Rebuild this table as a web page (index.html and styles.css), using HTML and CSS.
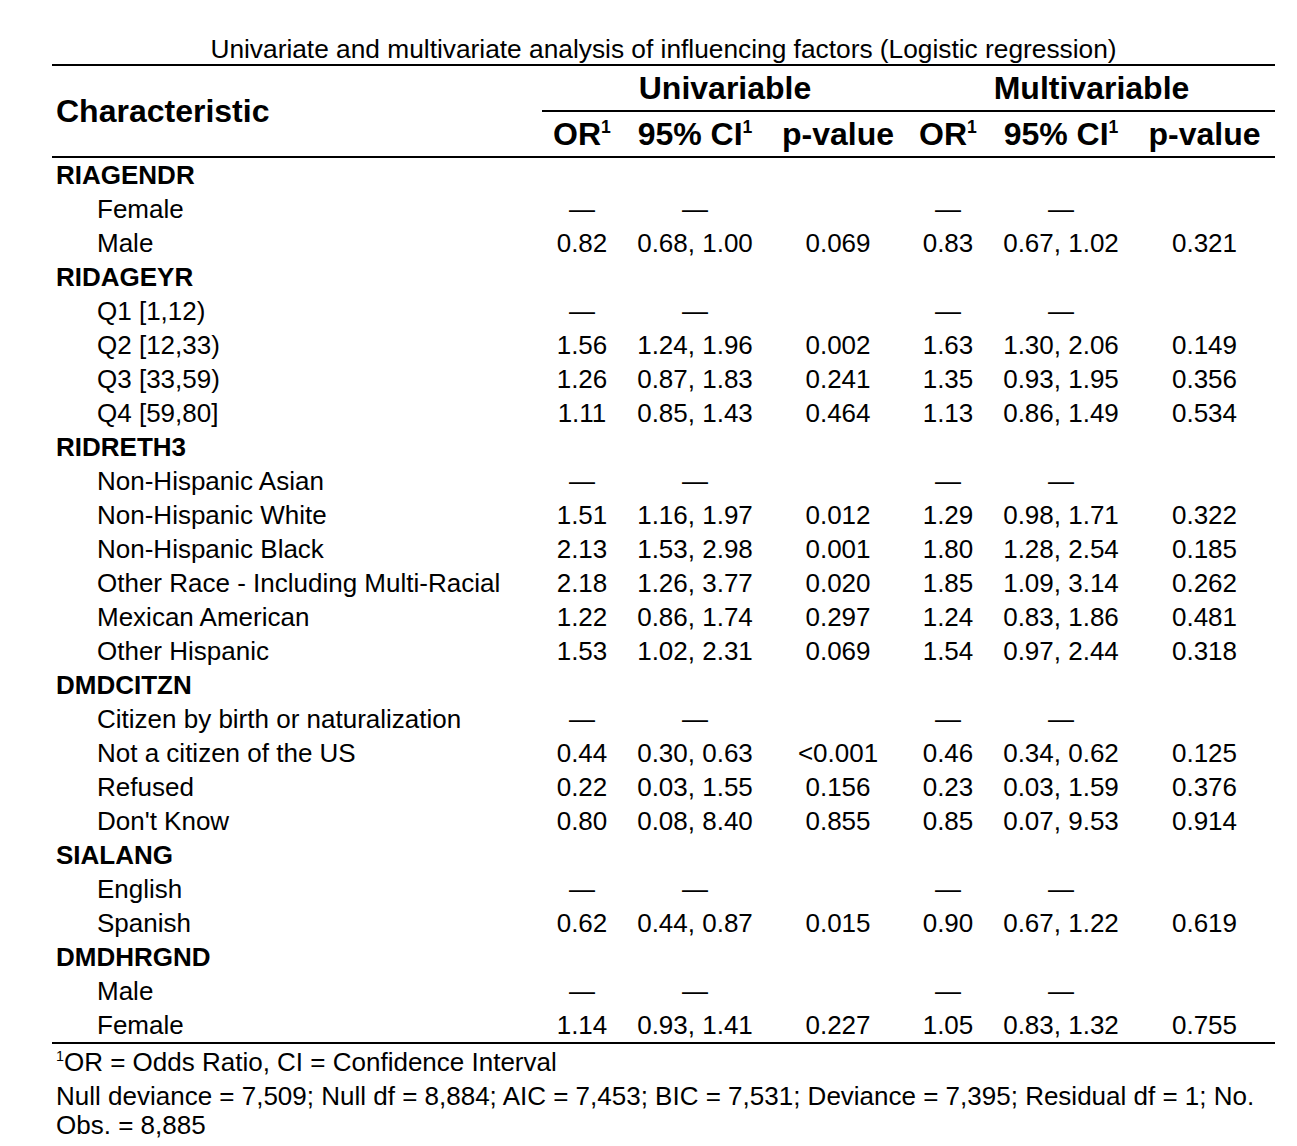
FILE: index.html
```html
<!DOCTYPE html>
<html>
<head>
<meta charset="utf-8">
<link rel="stylesheet" href="styles.css">
</head>
<body>
<div class="wrap">
<table class="tbl">
<caption class="title">Univariate and multivariate analysis of influencing factors (Logistic regression)</caption>
<colgroup>
<col class="c-label"><col class="c-or"><col class="c-ci"><col class="c-p"><col class="c-or"><col class="c-ci"><col class="c-p2">
</colgroup>
<thead>
<tr class="h1">
<th class="hchar" rowspan="2">Characteristic</th>
<th class="span" colspan="3">Univariable</th>
<th class="span" colspan="3">Multivariable</th>
</tr>
<tr class="h2">
<th>OR<sup>1</sup></th><th>95% CI<sup>1</sup></th><th>p-value</th>
<th>OR<sup>1</sup></th><th>95% CI<sup>1</sup></th><th>p-value</th>
</tr>
</thead>
<tbody>
<tr><td class="var">RIAGENDR</td><td></td><td></td><td></td><td></td><td></td><td></td></tr>
<tr><td class="lvl">Female</td><td>—</td><td>—</td><td></td><td>—</td><td>—</td><td></td></tr>
<tr><td class="lvl">Male</td><td>0.82</td><td>0.68, 1.00</td><td>0.069</td><td>0.83</td><td>0.67, 1.02</td><td>0.321</td></tr>
<tr><td class="var">RIDAGEYR</td><td></td><td></td><td></td><td></td><td></td><td></td></tr>
<tr><td class="lvl">Q1 [1,12)</td><td>—</td><td>—</td><td></td><td>—</td><td>—</td><td></td></tr>
<tr><td class="lvl">Q2 [12,33)</td><td>1.56</td><td>1.24, 1.96</td><td>0.002</td><td>1.63</td><td>1.30, 2.06</td><td>0.149</td></tr>
<tr><td class="lvl">Q3 [33,59)</td><td>1.26</td><td>0.87, 1.83</td><td>0.241</td><td>1.35</td><td>0.93, 1.95</td><td>0.356</td></tr>
<tr><td class="lvl">Q4 [59,80]</td><td>1.11</td><td>0.85, 1.43</td><td>0.464</td><td>1.13</td><td>0.86, 1.49</td><td>0.534</td></tr>
<tr><td class="var">RIDRETH3</td><td></td><td></td><td></td><td></td><td></td><td></td></tr>
<tr><td class="lvl">Non-Hispanic Asian</td><td>—</td><td>—</td><td></td><td>—</td><td>—</td><td></td></tr>
<tr><td class="lvl">Non-Hispanic White</td><td>1.51</td><td>1.16, 1.97</td><td>0.012</td><td>1.29</td><td>0.98, 1.71</td><td>0.322</td></tr>
<tr><td class="lvl">Non-Hispanic Black</td><td>2.13</td><td>1.53, 2.98</td><td>0.001</td><td>1.80</td><td>1.28, 2.54</td><td>0.185</td></tr>
<tr><td class="lvl">Other Race - Including Multi-Racial</td><td>2.18</td><td>1.26, 3.77</td><td>0.020</td><td>1.85</td><td>1.09, 3.14</td><td>0.262</td></tr>
<tr><td class="lvl">Mexican American</td><td>1.22</td><td>0.86, 1.74</td><td>0.297</td><td>1.24</td><td>0.83, 1.86</td><td>0.481</td></tr>
<tr><td class="lvl">Other Hispanic</td><td>1.53</td><td>1.02, 2.31</td><td>0.069</td><td>1.54</td><td>0.97, 2.44</td><td>0.318</td></tr>
<tr><td class="var">DMDCITZN</td><td></td><td></td><td></td><td></td><td></td><td></td></tr>
<tr><td class="lvl">Citizen by birth or naturalization</td><td>—</td><td>—</td><td></td><td>—</td><td>—</td><td></td></tr>
<tr><td class="lvl">Not a citizen of the US</td><td>0.44</td><td>0.30, 0.63</td><td>&lt;0.001</td><td>0.46</td><td>0.34, 0.62</td><td>0.125</td></tr>
<tr><td class="lvl">Refused</td><td>0.22</td><td>0.03, 1.55</td><td>0.156</td><td>0.23</td><td>0.03, 1.59</td><td>0.376</td></tr>
<tr><td class="lvl">Don't Know</td><td>0.80</td><td>0.08, 8.40</td><td>0.855</td><td>0.85</td><td>0.07, 9.53</td><td>0.914</td></tr>
<tr><td class="var">SIALANG</td><td></td><td></td><td></td><td></td><td></td><td></td></tr>
<tr><td class="lvl">English</td><td>—</td><td>—</td><td></td><td>—</td><td>—</td><td></td></tr>
<tr><td class="lvl">Spanish</td><td>0.62</td><td>0.44, 0.87</td><td>0.015</td><td>0.90</td><td>0.67, 1.22</td><td>0.619</td></tr>
<tr><td class="var">DMDHRGND</td><td></td><td></td><td></td><td></td><td></td><td></td></tr>
<tr><td class="lvl">Male</td><td>—</td><td>—</td><td></td><td>—</td><td>—</td><td></td></tr>
<tr class="last"><td class="lvl">Female</td><td>1.14</td><td>0.93, 1.41</td><td>0.227</td><td>1.05</td><td>0.83, 1.32</td><td>0.755</td></tr>
</tbody>
<tfoot>
<tr><td class="fn1" colspan="7"><sup>1</sup>OR = Odds Ratio, CI = Confidence Interval</td></tr>
<tr><td class="fn2" colspan="7">Null deviance = 7,509; Null df = 8,884; AIC = 7,453; BIC = 7,531; Deviance = 7,395; Residual df = 1; No. Obs. = 8,885</td></tr>
</tfoot>
</table>
</div>
</body>
</html>
```
FILE: styles.css
```css
html, body {
  margin: 0;
  padding: 0;
  background: #ffffff;
}
body {
  font-family: "Liberation Sans", Arial, sans-serif;
  color: #000000;
}
.wrap {
  padding: 34px 0 0 52px;
}
.tbl {
  width: 1223px;
  table-layout: fixed;
  border-collapse: collapse;
  font-size: 26px;
}
.title {
  caption-side: top;
  text-align: center;
  font-size: 26.3px;
  line-height: 29px;
  height: 29px;
  padding-top: 1px;
  white-space: nowrap;
}
.c-label { width: 490px; }
.c-or { width: 80px; }
.c-ci { width: 146px; }
.c-p { width: 140px; }
.c-p2 { width: 141px; }

thead th {
  font-weight: bold;
  font-size: 32px;
  text-align: center;
  padding: 0 4px;
  white-space: nowrap;
}
.h1 th {
  border-top: 2px solid #000;
  height: 44px;
  line-height: 44px;
}
.h1 th.span {
  border-bottom: 2px solid #000;
}
.h2 th {
  height: 44px;
  line-height: 44px;
  border-bottom: 2px solid #000;
}
th.hchar {
  text-align: left;
  border-bottom: 2px solid #000;
  vertical-align: middle;
}
sup {
  font-size: 0.55em;
  line-height: 0;
  vertical-align: 0.7em;
}
tbody td {
  height: 34px;
  line-height: 34px;
  padding: 0 4px;
  text-align: center;
  white-space: nowrap;
}
tbody td.var {
  text-align: left;
  font-weight: bold;
}
tbody td.lvl {
  text-align: left;
  padding-left: 45px;
}
tr.last td {
  border-bottom: 2px solid #000;
}
tfoot td {
  padding: 0 4px;
  text-align: left;
}
.fn1 {
  height: 34px;
  line-height: 34px;
  padding-top: 1px;
}
.fn2 {
  line-height: 29px;
  padding-top: 3px;
}
```
